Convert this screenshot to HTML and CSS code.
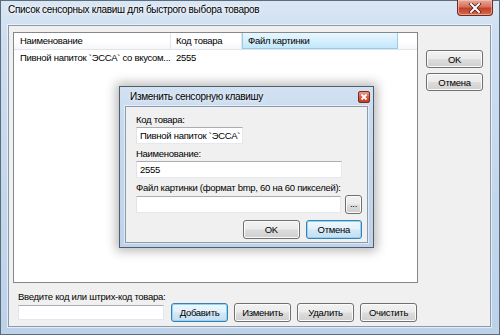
FILE: index.html
```html
<!DOCTYPE html>
<html>
<head>
<meta charset="utf-8">
<title>Список сенсорных клавиш</title>
<link rel="stylesheet" href="styles.css">
</head>
<body>
<div class="window">
  <div class="titlebar">
    <span class="title">Список сенсорных клавиш для быстрого выбора товаров</span>
    <div class="close-btn">
      <svg width="14" height="10" viewBox="0 0 14 10"><path d="M3 1 L11 9 M11 1 L3 9" stroke="#3a1a14" stroke-width="3.4" stroke-linecap="square"/><path d="M3 1 L11 9 M11 1 L3 9" stroke="#ffffff" stroke-width="2" stroke-linecap="square"/></svg>
    </div>
  </div>
  <div class="client">
    <div class="main">
      <div class="list">
        <div class="list-header">
          <div class="col c1">Наименование</div>
          <div class="col c2">Код товара</div>
          <div class="col c3 hot">Файл картинки</div>
          <div class="col rest"></div>
        </div>
        <div class="row">
          <div class="cell c1">Пивной напиток `ЭССА` со вкусом...</div>
          <div class="cell c2">2555</div>
        </div>
      </div>
      <div class="bottom">
        <div class="label">Введите код или штрих-код товара:</div>
        <div class="controls">
          <div class="input code-input"></div>
          <div class="btn default">Добавить</div>
          <div class="btn">Изменить</div>
          <div class="btn">Удалить</div>
          <div class="btn">Очистить</div>
        </div>
      </div>
    </div>
    <div class="side">
      <div class="btn">OK</div>
      <div class="btn">Отмена</div>
    </div>
  </div>

  <div class="dialog">
    <div class="dlg-titlebar">
      <span class="dlg-title">Изменить сенсорную клавишу</span>
      <div class="dlg-close">
        <svg width="8" height="8" viewBox="0 0 8 8"><path d="M1.5 1.5 L6.5 6.5 M6.5 1.5 L1.5 6.5" stroke="#ffffff" stroke-width="1.8"/></svg>
      </div>
    </div>
    <div class="dlg-client">
      <div class="dlabel">Код товара:</div>
      <div class="input dinput short">Пивной напиток `ЭССА`</div>
      <div class="dlabel">Наименование:</div>
      <div class="input dinput wide">2555</div>
      <div class="dlabel">Файл картинки (формат bmp, 60 на 60 пикселей):</div>
      <div class="file-row">
        <div class="input dinput wide"></div>
        <div class="btn browse">...</div>
      </div>
      <div class="dlg-buttons">
        <div class="btn">OK</div>
        <div class="btn default">Отмена</div>
      </div>
    </div>
  </div>
</div>
</body>
</html>
```

FILE: styles.css
```css
html, body {
  margin: 0;
  padding: 0;
}
body {
  width: 500px;
  height: 335px;
  overflow: hidden;
  font-family: "Liberation Sans", Arial, sans-serif;
  font-size: 9.5px;
  letter-spacing: -0.28px;
  color: #000;
}
.window {
  position: relative;
  box-sizing: border-box;
  width: 500px;
  height: 335px;
  border: 1px solid #5d6c7d;
  background: linear-gradient(180deg, #d9e6f4 0%, #cddef0 12%, #c3d7ec 60%, #bdd2e9 100%);
  display: flex;
  flex-direction: column;
  padding: 0 8px 7px 7px;
}
.titlebar {
  height: 24px;
  display: flex;
  justify-content: space-between;
  align-items: flex-start;
}
.title {
  font-size: 10px;
  letter-spacing: -0.3px;
  line-height: 14px;
  padding-top: 2px;
  color: #000;
  text-shadow: 0 0 6px #fff, 0 0 3px #fff;
}
.close-btn {
  width: 36px;
  height: 16px;
  box-sizing: border-box;
  margin-top: -1px;
  margin-right: -2px;
  border: 1px solid #6e2a20;
  border-top: none;
  border-radius: 0 0 4px 4px;
  background: linear-gradient(180deg, #e8a898 0%, #d7725e 45%, #c4402a 55%, #d66a4a 100%);
  box-shadow: inset 0 0 0 1px rgba(255, 210, 200, 0.55);
  display: flex;
  align-items: center;
  justify-content: center;
}
.client {
  flex: 1;
  box-sizing: border-box;
  border: 1px solid #8a9bae;
  box-shadow: 0 0 0 1px rgba(255, 255, 255, 0.55);
  background: #f0f0f0;
  display: flex;
  gap: 8px;
  padding: 6px 7px 0 4px;
}
.main {
  width: 405px;
  display: flex;
  flex-direction: column;
}
.list {
  box-sizing: border-box;
  height: 251px;
  border: 1px solid #828790;
  background: #ffffff;
}
.list-header {
  display: flex;
  height: 16px;
  border-bottom: 1px solid #e2e4e8;
  background: linear-gradient(180deg, #ffffff 0%, #ffffff 50%, #f6f7f9 100%);
}
.col {
  box-sizing: border-box;
  height: 16px;
  line-height: 15px;
  border-right: 1px solid #e3e5e9;
  padding-left: 5px;
  white-space: nowrap;
  overflow: hidden;
}
.c1 { width: 157px; padding-left: 6px; }
.c2 { width: 71px; }
.c3 { width: 156px; }
.col.hot {
  background: linear-gradient(180deg, #e8f7ff 0%, #d6f0fd 50%, #c3e7fb 100%);
  border: 1px solid #97cde9;
  border-top: none;
  line-height: 15px;
}
.col.rest {
  flex: 1;
  border-right: none;
}
.row {
  display: flex;
  height: 16px;
  line-height: 16px;
}
.cell {
  box-sizing: border-box;
  padding-left: 5px;
  white-space: nowrap;
  overflow: hidden;
}
.cell.c1 { padding-left: 6px; }
.bottom {
  padding-left: 5px;
}
.label {
  margin-top: 7px;
  line-height: 13px;
  height: 13px;
}
.controls {
  display: flex;
  align-items: center;
  gap: 6px;
  height: 19px;
}
.input {
  box-sizing: border-box;
  background: #ffffff;
  border: 1px solid #e3e9ef;
  border-top-color: #abadb3;
  border-left-color: #e2e3ea;
  height: 15px;
}
.code-input {
  width: 146px;
  margin-right: 1px;
}
.btn {
  box-sizing: border-box;
  width: 57px;
  height: 19px;
  border: 1px solid #707070;
  border-radius: 3px;
  background: linear-gradient(180deg, #f2f2f2 0%, #ebebeb 48%, #dddddd 52%, #cfcfcf 100%);
  box-shadow: inset 0 0 0 1px #fbfbfb;
  display: flex;
  align-items: center;
  justify-content: center;
  line-height: 13px;
  color: #000;
}
.btn.default {
  border-color: #3c7fb1;
  box-shadow: inset 0 0 0 1px #8fd6f6;
  background: linear-gradient(180deg, #eef7fd 0%, #e3f1fb 48%, #d2e8f7 52%, #c4dff2 100%);
}
.side {
  width: 57px;
  display: flex;
  flex-direction: column;
  gap: 5px;
  padding-top: 18px;
}
.side .btn {
  height: 18px;
}

/* dialog */
.dialog {
  position: absolute;
  left: 118px;
  top: 85px;
  width: 255px;
  height: 162px;
  box-sizing: border-box;
  border: 1px solid #4f5d6c;
  background: linear-gradient(180deg, #d3e2f2 0%, #c7daee 20%, #bed3ea 100%);
  box-shadow: 0 0 10px 3px rgba(0, 0, 0, 0.28);
  display: flex;
  flex-direction: column;
  padding: 0 5px 4px 5px;
}
.dlg-titlebar {
  height: 19px;
  display: flex;
  align-items: center;
  justify-content: space-between;
  padding-left: 5px;
  margin-right: -2px;
}
.dlg-title {
  font-size: 10px;
  letter-spacing: -0.3px;
  line-height: 14px;
  text-shadow: 0 0 5px #fff;
}
.dlg-close {
  width: 12px;
  height: 12px;
  box-sizing: border-box;
  border: 1px solid #7a2a1e;
  border-radius: 2px;
  background: linear-gradient(180deg, #eb9c8a 0%, #d5563c 55%, #c63c22 100%);
  display: flex;
  align-items: center;
  justify-content: center;
}
.dlg-client {
  flex: 1;
  box-sizing: border-box;
  border: 1px solid #8a9bae;
  box-shadow: 0 0 0 1px rgba(255, 255, 255, 0.5);
  background: #f0f0f0;
  padding: 6px 5px 0 10px;
  display: flex;
  flex-direction: column;
}
.dlabel {
  line-height: 14px;
  height: 14px;
  white-space: nowrap;
}
.dinput {
  height: 17px;
  line-height: 15px;
  padding-left: 3px;
  white-space: nowrap;
  overflow: hidden;
}
.dinput.short {
  width: 107px;
  margin-bottom: 3px;
}
.dinput.wide {
  width: 206px;
}
.dinput.wide + .dlabel {
  margin-top: 3px;
}
.file-row {
  display: flex;
  align-items: center;
  gap: 4px;
  height: 19px;
}
.btn.browse {
  width: 17px;
  height: 19px;
  line-height: 10px;
  align-items: flex-end;
  padding-bottom: 4px;
}
.dlg-buttons {
  display: flex;
  gap: 6px;
  margin-top: 6px;
  padding-left: 107px;
}
```
